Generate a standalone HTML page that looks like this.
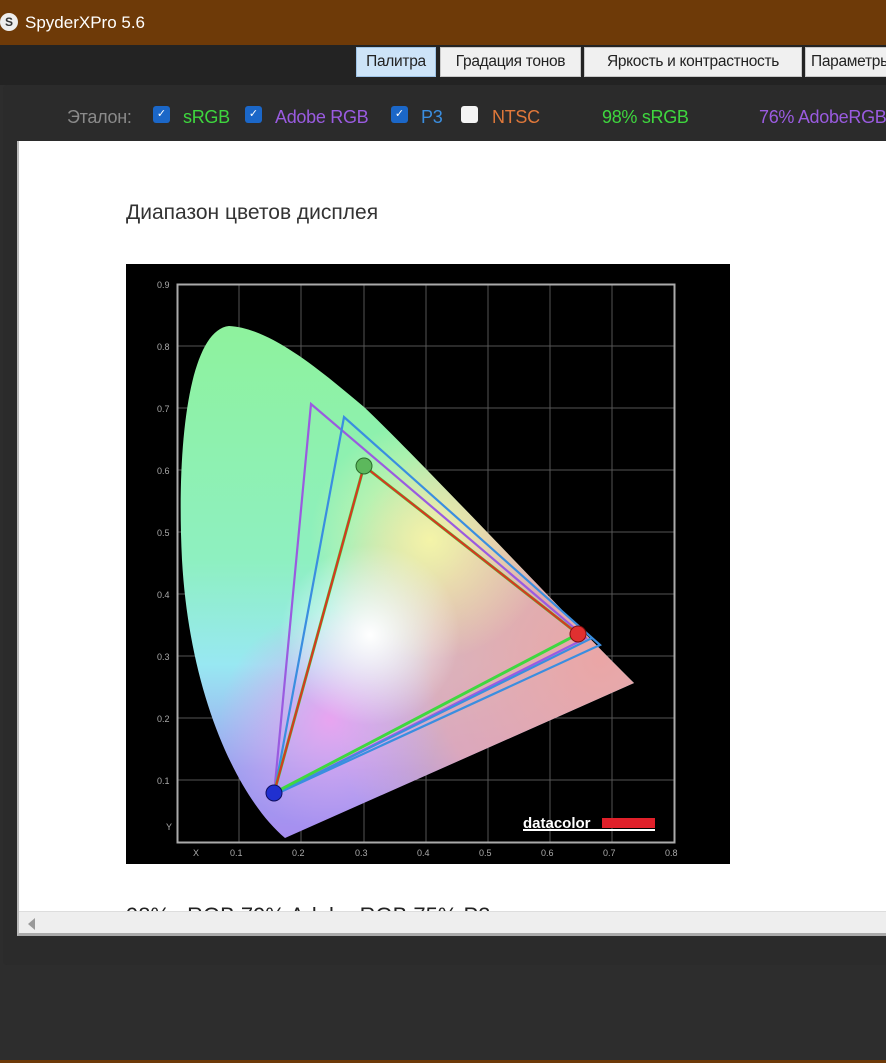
<!DOCTYPE html>
<html><head><meta charset="utf-8">
<style>
*{margin:0;padding:0;box-sizing:border-box}
body{width:886px;height:1063px;background:#2d2d2d;font-family:"Liberation Sans",sans-serif;position:relative;overflow:hidden}
.title{position:absolute;left:0;top:0;width:886px;height:45px;background:#6e3a08;color:#fff;font-size:17px}
.title span{position:absolute;left:25px;top:13px}
.logo{position:absolute;left:0;top:13px;width:18px;height:18px;border-radius:50%;background:#eee;color:#333;font-size:12px;font-weight:bold;text-align:center;line-height:18px}
.top{position:absolute;left:0;top:45px;width:886px;height:40px;background:#232323}
.tabs div{position:absolute;top:47px;height:30px;background:#f0f0f0;border:1px solid #c8c8c8;padding:5px 0 0;text-align:center;white-space:nowrap;font-size:15.5px;color:#222;overflow:hidden;letter-spacing:-0.3px}
.tabs div.a{background:#cde4f8;border-color:#9ec3e6}
.panel{position:absolute;left:3px;top:85px;width:890px;height:880px;background:#2b2b2b;border-radius:4px}
.tb{position:absolute;top:107px;font-size:18px;letter-spacing:-0.3px}
.cb{position:absolute;top:106px;width:17px;height:17px;border-radius:3px;background:#1b67c8;color:#fff;font-size:11px;text-align:center;line-height:17px}
.content{position:absolute;left:17px;top:141px;width:869px;height:795px;background:#fff;border-left:2px solid #bbb;border-bottom:3px solid #aaa;overflow:hidden}
.scroll{position:absolute;left:0;top:770px;width:869px;height:22px;background:#eeeeee;border-top:1px solid #ddd}
</style></head><body>
<div class="title"><div class="logo">S</div><span>SpyderXPro 5.6</span></div>
<div class="top"></div>
<div class="tabs"><div class="a" style="left:356px;width:80px">Палитра</div><div style="left:440px;width:141px">Градация тонов</div><div style="left:584px;width:218px">Яркость и контрастность</div><div style="left:805px;width:90px;text-align:left;padding-left:5px">Параметры</div></div>
<div class="panel"></div>
<div class="tb" style="left:67px;color:#8a8a8a">Эталон:</div>
<div class="cb" style="left:153px">✓</div><div class="tb" style="left:183px;color:#3ed63e">sRGB</div>
<div class="cb" style="left:245px">✓</div><div class="tb" style="left:275px;color:#9a5be0">Adobe RGB</div>
<div class="cb" style="left:391px">✓</div><div class="tb" style="left:421px;color:#3a8ee0">P3</div>
<div class="cb" style="left:461px;background:#f4f4f4"></div><div class="tb" style="left:492px;color:#e0783a">NTSC</div>
<div class="tb" style="left:602px;color:#3ed63e">98% sRGB</div>
<div class="tb" style="left:759px;color:#9a5be0;white-space:nowrap">76% AdobeRGB</div>
<div class="content">
<div style="position:absolute;left:107px;top:60px;font-size:21px;color:#333">Диапазон цветов дисплея</div>
<svg style="position:absolute;left:107px;top:123px" width="604" height="600" viewBox="126 264 604 600">
<defs>
<clipPath id="loc"><path d="M285,838 C240,800 190,700 182,560 C176,440 190,330 229,326 C270,328 320,370 364,407 C420,460 560,610 634,683 Z"/></clipPath>
<linearGradient id="v" x1="0" y1="0" x2="0" y2="1"><stop offset="0" stop-color="#8ef29c"/><stop offset="0.45" stop-color="#8ef0c0"/><stop offset="0.65" stop-color="#98e8f2"/><stop offset="0.85" stop-color="#a0a0f0"/><stop offset="1" stop-color="#a88af0"/></linearGradient>
<radialGradient id="r" cx="600" cy="660" r="280" gradientUnits="userSpaceOnUse"><stop offset="0" stop-color="#eaa6a6"/><stop offset="0.6" stop-color="#eaa6b0" stop-opacity="0.8"/><stop offset="1" stop-color="#eaa6b0" stop-opacity="0"/></radialGradient>
<radialGradient id="y" cx="430" cy="540" r="120" gradientUnits="userSpaceOnUse"><stop offset="0" stop-color="#f4f4a8"/><stop offset="1" stop-color="#f4f4a8" stop-opacity="0"/></radialGradient>
<radialGradient id="p" cx="330" cy="720" r="110" gradientUnits="userSpaceOnUse"><stop offset="0" stop-color="#e8a4f0"/><stop offset="1" stop-color="#e8a4f0" stop-opacity="0"/></radialGradient>
<radialGradient id="w" cx="370" cy="635" r="90" gradientUnits="userSpaceOnUse"><stop offset="0" stop-color="#fff"/><stop offset="1" stop-color="#fff" stop-opacity="0"/></radialGradient>
</defs>
<rect x="126" y="264" width="604" height="600" fill="#000"/>
<g stroke="#555" stroke-width="1">
<path d="M239 285V842M301 285V842M364 285V842M426 285V842M488 285V842M550 285V842M612 285V842M177 346H674M177 408H674M177 470H674M177 532H674M177 594H674M177 656H674M177 718H674M177 780H674"/>
</g>
<rect x="177.5" y="284.5" width="497" height="558" fill="none" stroke="#aaa" stroke-width="2"/>
<g fill="#aaa" font-size="9" font-family="Liberation Sans,sans-serif">
<text x="157" y="288">0.9</text><text x="157" y="350">0.8</text><text x="157" y="412">0.7</text><text x="157" y="474">0.6</text><text x="157" y="536">0.5</text><text x="157" y="598">0.4</text><text x="157" y="660">0.3</text><text x="157" y="722">0.2</text><text x="157" y="784">0.1</text><text x="166" y="830">Y</text>
<text x="193" y="856">X</text><text x="230" y="856">0.1</text><text x="292" y="856">0.2</text><text x="355" y="856">0.3</text><text x="417" y="856">0.4</text><text x="479" y="856">0.5</text><text x="541" y="856">0.6</text><text x="603" y="856">0.7</text><text x="665" y="856">0.8</text>
</g>
<g clip-path="url(#loc)">
<rect x="170" y="320" width="480" height="530" fill="url(#v)"/>
<rect x="170" y="320" width="480" height="530" fill="url(#r)"/>
<rect x="170" y="320" width="480" height="530" fill="url(#y)"/>
<rect x="170" y="320" width="480" height="530" fill="url(#p)"/>
<rect x="170" y="320" width="480" height="530" fill="url(#w)"/>
</g>
<g fill="none" stroke-width="2.2" stroke-linejoin="miter">
<path d="M586 638 L311 404 L274 795 Z" stroke="#9a5be0"/>
<path d="M600 645 L344 417 L274 795 Z" stroke="#3a8ee0"/>
<path d="M592 638 L274 795" stroke="#3a8ee0"/>
<path d="M578 634 L364 466 L274 793 Z" stroke="#3fd83f" stroke-width="3"/>
<path d="M578 634 L364 466 L274 793" stroke="#d43a20"/>
</g>
<circle cx="364" cy="466" r="8" fill="#5cb85c" stroke="#2a6a2a"/>
<circle cx="578" cy="634" r="8" fill="#e03030" stroke="#801010"/>
<circle cx="274" cy="793" r="8" fill="#2030d0" stroke="#101060"/>
<text x="523" y="828" fill="#fff" font-size="15" font-weight="bold" font-family="Liberation Sans,sans-serif">datacolor</text>
<rect x="523" y="829" width="132" height="2" fill="#fff"/>
<rect x="602" y="818" width="53" height="10" fill="#e0202a"/>
</svg>
<div style="position:absolute;left:107px;top:762px;font-size:22px;color:#222;white-space:nowrap">98% sRGB 79% Adobe RGB 75% P3</div>
<div class="scroll"><div style="position:absolute;left:9px;top:6px;width:0;height:0;border-top:6px solid transparent;border-bottom:6px solid transparent;border-right:7px solid #999"></div></div>
</div>
<div style="position:absolute;left:0;top:1060px;width:886px;height:3px;background:#6e3a08"></div>
</body></html>
